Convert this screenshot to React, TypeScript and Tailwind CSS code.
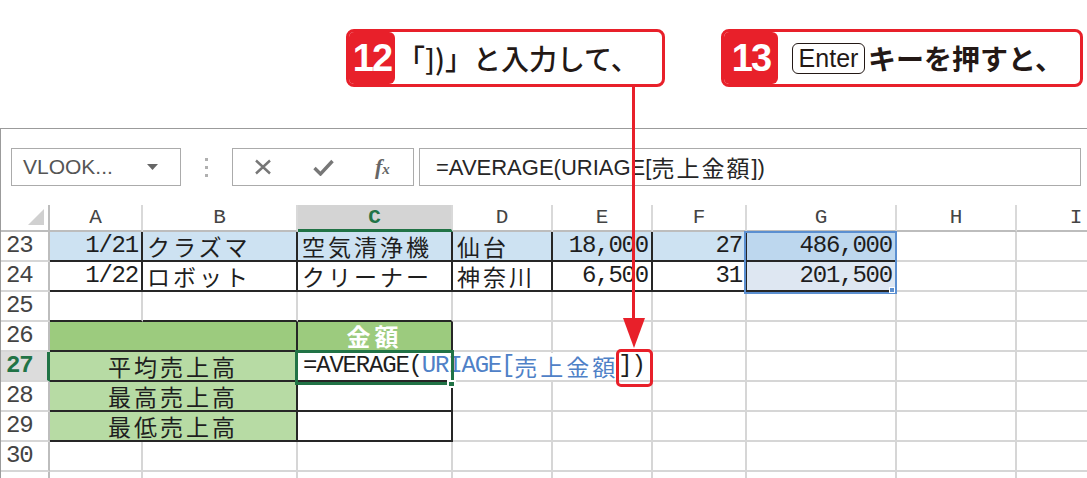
import React from "react";

const HALF = "font-['Liberation_Mono',monospace] text-[24px] leading-none tracking-[-1.2px]";
const FULL = "font-['Noto_Sans_CJK_JP',sans-serif] text-[23px] leading-none tracking-[3px]";
const JP = "font-['Noto_Sans_CJK_JP',sans-serif]";

function N({ children, className = "" }: { children: React.ReactNode; className?: string }) {
  return <span className={`${HALF} ${className}`}>{children}</span>;
}

function J({ children, className = "" }: { children: React.ReactNode; className?: string }) {
  return <span className={`${FULL} ${className}`}>{children}</span>;
}

type CellProps = {
  children?: React.ReactNode;
  align?: "l" | "r" | "c";
  bg?: string;
  rk?: boolean;
  bk?: boolean;
  span?: boolean;
};

// one grid cell, black borders on the right/bottom where the table has them
function Cell({ children, align = "l", bg = "bg-white", rk, bk, span }: CellProps) {
  return (
    <div
      className={`${span ? "col-span-2" : ""} h-[30px] border-r-2 border-b-2 ${rk ? "border-r-[#262626]" : "border-r-[#d6d6d6]"} ${
        bk ? "border-b-[#262626]" : "border-b-[#d6d6d6]"
      } ${bg} flex items-center whitespace-nowrap leading-none text-[#1e1e1e] ${
        align === "r" ? "justify-end pr-[3px]" : align === "c" ? "justify-center" : "pl-[4px]"
      }`}
    >
      {children}
    </div>
  );
}

function RowHead({ n, active }: { n?: number; active?: boolean }) {
  return (
    <div
      className={`h-[30px] border-b-2 border-b-[#d6d6d6] flex items-center pl-[5px] ${
        active
          ? "bg-[#dcdcdc] border-r-[3px] border-r-[#217346] text-[#217346] font-bold"
          : "bg-white border-r-2 border-r-[#bdbdbd] text-[#444]"
      }`}
    >
      {n ? <N>{n}</N> : null}
    </div>
  );
}

function ColHead({ l, active }: { l: string; active?: boolean }) {
  return (
    <div
      className={`h-[27px] border-r-2 border-r-[#d9d9d9] flex items-center justify-center font-['Liberation_Mono',monospace] text-[21px] leading-none ${
        active
          ? "bg-[#d4d4d4] border-b-[3px] border-b-[#217346] text-[#217346] font-bold"
          : "bg-white border-b-2 border-b-[#bdbdbd] text-[#444]"
      }`}
    >
      {l}
    </div>
  );
}

function Callouts() {
  return (
    <div className="h-[128px] pt-[29px] pl-[346px] flex gap-[56px]">
      <div className="flex h-[58px] w-[319px] rounded-[8px] border-[3px] border-[#e8202a] bg-white overflow-hidden">
        <div className="w-[46px] bg-[#e8202a] rounded-r-[6px] flex items-center justify-center text-white font-bold text-[38px] tracking-[-2px] font-['Liberation_Sans',sans-serif]">
          12
        </div>
        <div className={`pl-[2px] flex items-center text-[28px] font-medium text-[#231815] ${JP}`}>「])」と入力して、</div>
      </div>
      <div className="flex h-[58px] w-[362px] rounded-[8px] border-[3px] border-[#e8202a] bg-white overflow-hidden">
        <div className="w-[54px] bg-[#e8202a] rounded-r-[6px] flex items-center justify-center text-white font-bold text-[38px] tracking-[-2px] font-['Liberation_Sans',sans-serif]">
          13
        </div>
        <div className="flex items-center pl-[14px]">
          <div className="w-[73px] h-[31px] border-[1.5px] border-[#231815] rounded-[6px] flex items-center justify-center text-[25px] leading-none text-[#231815] font-['Liberation_Sans',sans-serif]">
            Enter
          </div>
          <span className={`pl-[3px] text-[28px] font-bold text-[#231815] ${JP}`}>キーを押すと、</span>
        </div>
      </div>
    </div>
  );
}

function FormulaBar() {
  return (
    <div className="h-[76px] flex items-center pl-[10px]">
      <div className="w-[170px] h-[38px] border border-[#ababab] flex items-center justify-between pl-[11px] pr-[22px]">
        <span className="font-['Liberation_Sans',sans-serif] text-[21px] text-[#555]">VLOOK...</span>
        <svg width="11" height="6" viewBox="0 0 11 6">
          <path d="M0 0 L11 0 L5.5 6 Z" fill="#666" />
        </svg>
      </div>
      <div className="w-[51px] flex flex-col items-center gap-[5px]">
        <div className="w-[3px] h-[3px] bg-[#b0b0b0]" />
        <div className="w-[3px] h-[3px] bg-[#b0b0b0]" />
        <div className="w-[3px] h-[3px] bg-[#b0b0b0]" />
      </div>
      <div className="w-[182px] h-[38px] border border-[#ababab] flex items-center pl-[20px]">
        <svg width="20" height="16" viewBox="0 0 20 16">
          <path d="M3 1.5 L17 14.5 M17 1.5 L3 14.5" stroke="#777" strokeWidth="2.4" />
        </svg>
        <svg className="ml-[40px]" width="21" height="17" viewBox="0 0 21 17">
          <path d="M1.5 9 L7.5 15 L19.5 2" stroke="#777" strokeWidth="3.4" fill="none" />
        </svg>
        <span className="ml-[41px] font-['Liberation_Serif',serif] italic font-bold text-[22px] text-[#666] leading-none">
          f<span className="text-[15px]">x</span>
        </span>
      </div>
      <div className="ml-[5px] w-[662px] h-[38px] border border-[#ababab] flex items-center pl-[16px] font-['Liberation_Sans',sans-serif] text-[22px] text-[#262626]">
        =AVERAGE(URIAGE[<span className={`${JP} text-[23px] tracking-[2px]`}>売上金額</span>])
      </div>
    </div>
  );
}

const BLUE = "bg-[#cde2f2]";
const G1 = "bg-[#9ccb7e]";
const G2 = "bg-[#b7dba4]";

function Sheet() {
  return (
    <div className="grid grid-cols-[49px_93px_155px_155px_100px_100px_94px_150px_120px_120px]">
      <div className="h-[27px] border-r-2 border-r-[#bdbdbd] border-b-2 border-b-[#bdbdbd] bg-white flex items-end justify-end pr-[4px] pb-[5px]">
        <svg width="16" height="16" viewBox="0 0 16 16">
          <path d="M16 0 L16 16 L0 16 Z" fill="#d0d0d0" />
        </svg>
      </div>
      <ColHead l="A" />
      <ColHead l="B" />
      <ColHead l="C" active />
      <ColHead l="D" />
      <ColHead l="E" />
      <ColHead l="F" />
      <ColHead l="G" />
      <ColHead l="H" />
      <ColHead l="I" />

      {/* 23 */}
      <RowHead n={23} />
      <Cell align="r" bg={BLUE} rk bk><N>1/21</N></Cell>
      <Cell bg={BLUE} rk bk><J>クラズマ</J></Cell>
      <Cell bg={BLUE} rk bk><J>空気清浄機</J></Cell>
      <Cell bg={BLUE} rk bk><J>仙台</J></Cell>
      <Cell align="r" bg={BLUE} rk bk><N>18,000</N></Cell>
      <Cell align="r" bg={BLUE} rk bk><N>27</N></Cell>
      <Cell align="r" bg="bg-[#bdd7ee]" bk><N>486,000</N></Cell>
      <Cell />
      <Cell />

      {/* 24 */}
      <RowHead n={24} />
      <Cell align="r" rk bk><N>1/22</N></Cell>
      <Cell rk bk><J>ロボット</J></Cell>
      <Cell rk bk><J>クリーナー</J></Cell>
      <Cell rk bk><J>神奈川</J></Cell>
      <Cell align="r" rk bk><N>6,500</N></Cell>
      <Cell align="r" rk bk><N>31</N></Cell>
      <Cell align="r" bg="bg-[#dee7f2]" bk><N>201,500</N></Cell>
      <Cell />
      <Cell />

      {/* 25 */}
      <RowHead n={25} />
      <Cell bk />
      <Cell bk />
      <Cell bk />
      <Cell />
      <Cell />
      <Cell />
      <Cell />
      <Cell />
      <Cell />

      {/* 26 */}
      <RowHead n={26} />
      <Cell span bg={G1} rk bk />
      <Cell align="c" bg={G1} rk bk>
        <span className={`${JP} text-[24px] leading-none font-bold tracking-[4px] text-white`}>金額</span>
      </Cell>
      <Cell />
      <Cell />
      <Cell />
      <Cell />
      <Cell />
      <Cell />

      {/* 27 */}
      <RowHead n={27} active />
      <Cell span align="c" bg={G2} rk bk><J>平均売上高</J></Cell>
      <Cell rk bk>
        <span className="relative z-10 bg-white h-[27px] flex items-center pl-[1px] pr-[2px]">
          <N>=AVERAGE(</N>
          <N className="text-[#4f81c7]">URIAGE[</N>
          <J className="text-[#4f81c7]">売上金額</J>
          <N>])</N>
        </span>
      </Cell>
      <Cell />
      <Cell />
      <Cell />
      <Cell />
      <Cell />
      <Cell />

      {/* 28 */}
      <RowHead n={28} />
      <Cell span align="c" bg={G2} rk bk><J>最高売上高</J></Cell>
      <Cell rk bk />
      <Cell />
      <Cell />
      <Cell />
      <Cell />
      <Cell />
      <Cell />

      {/* 29 */}
      <RowHead n={29} />
      <Cell span align="c" bg={G2} rk bk><J>最低売上高</J></Cell>
      <Cell rk bk />
      <Cell />
      <Cell />
      <Cell />
      <Cell />
      <Cell />
      <Cell />

      {/* 30 + a sliver of the next row */}
      <RowHead n={30} />
      <Cell /><Cell /><Cell /><Cell /><Cell /><Cell /><Cell /><Cell /><Cell />
      <RowHead />
      <Cell /><Cell /><Cell /><Cell /><Cell /><Cell /><Cell /><Cell /><Cell />
    </div>
  );
}

export default function App() {
  return (
    <div className="relative w-[1087px] h-[478px] overflow-hidden bg-white">
      <Callouts />
      <div className="border-t border-l border-[#9b9b9b]">
        <FormulaBar />
        <Sheet />
      </div>

      {/* selection G23:G24 */}
      <div className="absolute left-[744px] top-[231px] w-[153px] h-[63px] border-2 border-[#5b8fd0]" />
      <div className="absolute left-[889px] top-[287px] w-[6px] h-[6px] bg-[#5b8fd0] border border-white" />

      {/* active cell C27 */}
      <div className="absolute left-[295px] top-[350px] w-[159px] h-[35px] border-[3px] border-[#217346] z-20" />
      <div className="absolute left-[447px] top-[380px] w-[9px] h-[8px] bg-[#217346] border-2 border-white z-20" />

      {/* arrow + box */}
      <div className="absolute left-[632px] top-[87px] w-[3px] h-[234px] bg-[#e8202a] z-30" />
      <svg className="absolute left-[623px] top-[318px] z-30" width="22" height="30" viewBox="0 0 22 30">
        <path d="M0 0 L22 0 L11 30 Z" fill="#e8202a" />
      </svg>
      <div className="absolute left-[616px] top-[349px] w-[37px] h-[38px] border-[3px] border-[#e8202a] rounded-[5px] z-30" />
    </div>
  );
}
